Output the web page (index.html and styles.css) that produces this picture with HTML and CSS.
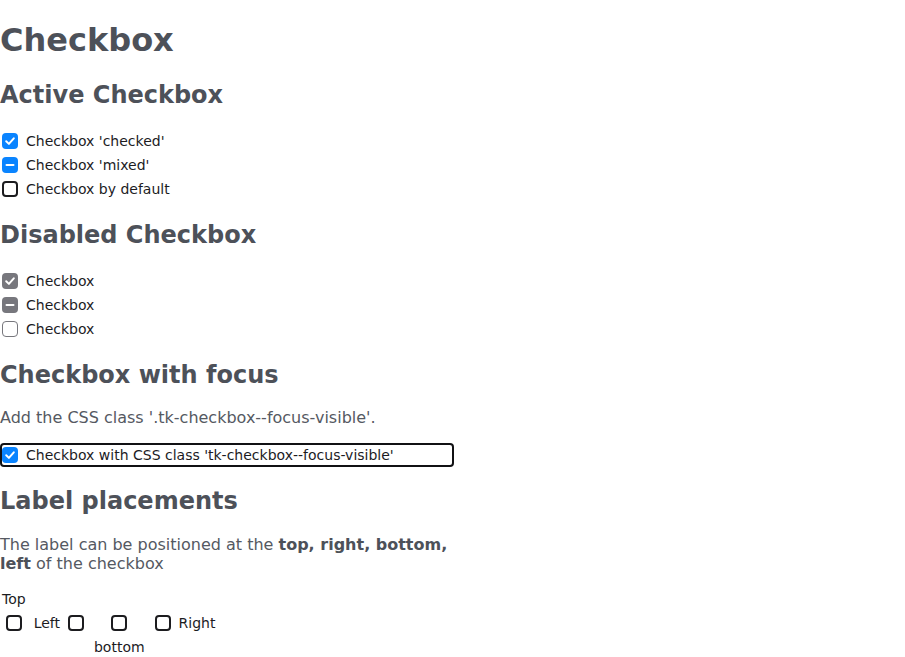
FILE: index.html
```html
<!DOCTYPE html>
<html lang="en">
<head>
<meta charset="utf-8">
<title>Checkbox</title>
<link rel="stylesheet" href="styles.css">
</head>
<body>
<main class="page">
  <h1>Checkbox</h1>

  <h2>Active Checkbox</h2>
  <div class="cb-list">
    <label class="cb">
      <span class="cb-box cb-box--on"><svg viewBox="0 0 16 16"><path d="M4.2 8.3 L6.9 10.9 L11.8 5.3"/></svg></span>
      <span class="cb-label">Checkbox 'checked'</span>
    </label>
    <label class="cb">
      <span class="cb-box cb-box--on"><svg viewBox="0 0 16 16"><path d="M4.5 8 H11.5"/></svg></span>
      <span class="cb-label">Checkbox 'mixed'</span>
    </label>
    <label class="cb">
      <span class="cb-box"></span>
      <span class="cb-label">Checkbox by default</span>
    </label>
  </div>

  <h2>Disabled Checkbox</h2>
  <div class="cb-list">
    <label class="cb">
      <span class="cb-box cb-box--dis-on"><svg viewBox="0 0 16 16"><path d="M4.2 8.3 L6.9 10.9 L11.8 5.3"/></svg></span>
      <span class="cb-label">Checkbox</span>
    </label>
    <label class="cb">
      <span class="cb-box cb-box--dis-on"><svg viewBox="0 0 16 16"><path d="M4.5 8 H11.5"/></svg></span>
      <span class="cb-label">Checkbox</span>
    </label>
    <label class="cb">
      <span class="cb-box cb-box--dis"></span>
      <span class="cb-label">Checkbox</span>
    </label>
  </div>

  <h2>Checkbox with focus</h2>
  <p>Add the CSS class '.tk-checkbox--focus-visible'.</p>
  <label class="cb cb--focus">
    <span class="cb-box cb-box--on"><svg viewBox="0 0 16 16"><path d="M4.2 8.3 L6.9 10.9 L11.8 5.3"/></svg></span>
    <span class="cb-label">Checkbox with CSS class 'tk-checkbox--focus-visible'</span>
  </label>

  <h2>Label placements</h2>
  <p>The label can be positioned at the <b>top, right, bottom, left</b> of the checkbox</p>
  <div class="placements">
    <label class="placement">
      <span class="cb-label pl-top">Top</span>
      <span class="pl-mid"><span class="cb-box"></span></span>
    </label>
    <label class="placement">
      <span class="pl-mid"><span class="cb-label">Left</span><span class="cb-box"></span></span>
    </label>
    <label class="placement">
      <span class="pl-mid"><span class="cb-box"></span></span>
      <span class="cb-label pl-bottom">bottom</span>
    </label>
    <label class="placement">
      <span class="pl-mid"><span class="cb-box"></span><span class="cb-label">Right</span></span>
    </label>
  </div>
</main>
</body>
</html>
```

FILE: styles.css
```css
html, body {
  margin: 0;
  padding: 0;
  background: #ffffff;
}

body {
  font-family: "DejaVu Sans", "Liberation Sans", sans-serif;
  color: #555962;
}

.page {
  width: 454px;
}

h1 {
  font-size: 32px;
  margin: 21.44px 0;
  color: #4d5159;
}

h2 {
  font-size: 24px;
  margin: 19.92px 0;
  color: #4d5159;
}

p {
  font-size: 16px;
  margin: 16px 0;
}

p b {
  color: #4d5159;
}

.cb {
  display: flex;
  align-items: center;
  height: 24px;
  box-sizing: border-box;
}

.cb-box {
  flex: none;
  width: 16px;
  height: 16px;
  margin: 0 2px;
  box-sizing: border-box;
  border: 2px solid #1c1c1f;
  border-radius: 4px;
  background: #ffffff;
  display: flex;
  align-items: center;
  justify-content: center;
}

.cb-box svg {
  width: 16px;
  height: 16px;
  flex: none;
}

.cb-box svg path {
  fill: none;
  stroke: #ffffff;
  stroke-width: 2;
  stroke-linecap: round;
  stroke-linejoin: round;
}

.cb-box--on {
  border: none;
  background: #0a84ff;
}

.cb-box--dis-on {
  border: none;
  background: #77777d;
}

.cb-box--dis {
  border: 1.5px solid #77777d;
}

.cb-label {
  font-size: 14px;
  color: #1c1c1f;
  white-space: nowrap;
}

.cb .cb-label {
  margin-left: 6px;
}

.cb--focus {
  width: 454px;
  border-radius: 4px;
  box-shadow: inset 0 0 0 2px #111114;
}

.placements {
  display: flex;
  gap: 8px;
  margin-top: -2px;
  padding-left: 2px;
}

.placement {
  display: grid;
  grid-template-rows: 24px 24px 24px;
  justify-items: center;
  align-items: center;
}

.pl-top {
  grid-row: 1;
}

.pl-mid {
  grid-row: 2;
  display: flex;
  align-items: center;
  gap: 6px;
}

.pl-bottom {
  grid-row: 3;
}
```
